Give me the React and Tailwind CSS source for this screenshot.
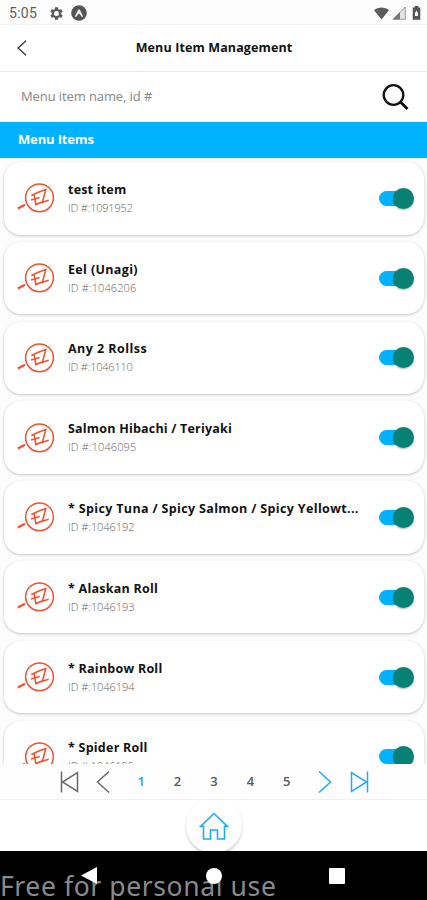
import React from 'react';

const items = [
  { name: 'test item', id: '1091952', nameCls: 'tracking-[0.2px]', idCls: 'tracking-[-0.2px]' },
  { name: 'Eel (Unagi)', id: '1046206', nameCls: 'tracking-[0.36px]', idCls: 'tracking-[0.1px]' },
  { name: 'Any 2 Rollss', id: '1046110', nameCls: 'tracking-[0.45px]', idCls: 'tracking-[-0.2px]' },
  { name: 'Salmon Hibachi / Teriyaki', id: '1046095', nameCls: 'tracking-[0.2px]', idCls: 'tracking-[0.1px]' },
  { name: '* Spicy Tuna / Spicy Salmon / Spicy Yellowt...', id: '1046192', nameCls: 'tracking-[0.35px]', idCls: 'tracking-[-0.05px]' },
  { name: '* Alaskan Roll', id: '1046193', nameCls: 'tracking-[0.24px]', idCls: 'tracking-[-0.05px]' },
  { name: '* Rainbow Roll', id: '1046194', nameCls: 'tracking-[0.24px]', idCls: 'tracking-[-0.05px]' },
  { name: '* Spider Roll', id: '1046195', nameCls: 'tracking-[0.24px]', idCls: 'tracking-[-0.1px]' },
];

const StatusBar = () => (
  <div className="h-6 shrink-0 flex items-center bg-[#fdfdfd] text-[#5c5c5c] pl-[9px] pr-[6px] pt-[2px]">
    <span className="w-[30px] text-[14px] leading-6 tracking-[0.3px] font-['Roboto',sans-serif]">5:05</span>
    <svg className="ml-[10px] w-[15px] h-[15px]" viewBox="0 0 24 24" fill="currentColor">
      <path
        fillRule="evenodd"
        d="M19.4 13a7.500 7.500 0 0 0 0-2l2.100-1.650a.5.5 0 0 0 .12-.64l-2-3.460a.5.5 0 0 0-.6-.22l-2.500 1a7.300 7.300 0 0 0-1.700-.98L14.500 2.400A.5.5 0 0 0 14 2h-4a.5.5 0 0 0-.5.4l-.37 2.650c-.6.250-1.170.58-1.690.98l-2.500-1a.5.5 0 0 0-.6.220l-2 3.460a.5.5 0 0 0 .12.64L4.600 11a7.900 7.900 0 0 0 0 2l-2.100 1.650a.5.5 0 0 0-.12.64l2 3.460c.12.22.38.3.6.22l2.500-1c.52.4 1.080.73 1.690.98l.38 2.650c.03.24.24.4.49.4h4c.25 0 .46-.16.5-.4l.37-2.650a7.300 7.300 0 0 0 1.690-.98l2.500 1c.22.08.48 0 .6-.22l2-3.460a.5.5 0 0 0-.12-.64zM12 16a4 4 0 1 1 0-8 4 4 0 0 1 0 8z"
      />
    </svg>
    <svg className="ml-[7px] w-4 h-4" viewBox="0 0 16 16">
      <circle cx="8" cy="8" r="7.800" fill="#555" />
      <path d="M3.800 11.500 7.300 4.400h1.400l3.500 7.100-1.300.6L8 8.300l-2.900 3.800z" fill="#eee" />
    </svg>
    <svg className="ml-auto w-[15px] h-[13px]" viewBox="0 0 15 13" fill="currentColor">
      <path d="M0 3.200C4.200-.4 10.800-.4 15 3.200L7.500 12.600z" />
    </svg>
    <svg className="ml-[3px] w-[14px] h-[14px]" viewBox="0 0 14 14">
      <path d="M.5 13.500 13.500.5v13z" fill="#e4e4e4" />
      <path d="M.5 13.500 8 6v7.500z" fill="#777" />
      <path d="M1 13.300 13.300 1v12.300z" fill="none" stroke="#888" strokeWidth=".8" />
    </svg>
    <svg className="ml-[6px] w-[9px] h-[14px]" viewBox="0 0 9 14">
      <path d="M2.700 0h3.600v1.500h2v12.200H.7V1.500h2z" fill="#555" />
      <path d="M4.500 4.500 6 7v3H3V7z" fill="#fff" />
    </svg>
  </div>
);

const Logo = () => (
  <svg className="w-[40px] h-[32px] shrink-0" viewBox="0 0 40 32" fill="none" stroke="#ee5333">
    <circle cx="22.500" cy="15.800" r="13.900" strokeWidth="1.500" />
    <path d="M.8 26.500 8 22.800" strokeWidth="2.300" />
    <path d="m14.300 13.500 7.600-3.400M17 12.400l1.900 10.200 6-2.600M14 18l8.600-2.600M21.900 10.100l6.900-2.600-3.400 12.800 6.300-2" strokeWidth="1.600" />
  </svg>
);

const Toggle = () => (
  <div className="w-[35px] h-[21px] shrink-0 flex items-center">
    <div className="w-[26px] h-[15px] rounded-full bg-[#00b2ff]" />
    <div className="-ml-[12px] w-[21px] h-[21px] rounded-full bg-[#078174] shadow-[0_1px_2px_rgba(0,0,0,0.3)]" />
  </div>
);

const ItemCard = ({ item }) => (
  <div className="h-[72.500px] shrink-0 flex items-center bg-white rounded-[17px] pl-[13px] pr-[10px] shadow-[0_1px_3px_rgba(0,0,0,0.22)]">
    <Logo />
    <div className="ml-[11px] flex-1 min-w-0 whitespace-nowrap font-['Open_Sans',sans-serif]">
      <p className={`text-[12.500px] leading-[19px] font-bold text-[#111] ${item.nameCls}`}>{item.name}</p>
      <p className={`text-[11px] leading-[18px] font-light text-[#666] ${item.idCls}`}>ID #:{item.id}</p>
    </div>
    <Toggle />
  </div>
);

const Pagination = () => (
  <div className="h-[35px] shrink-0 flex items-center bg-[#fefefe] pl-[60px] text-[13px] font-semibold text-[#555a5e] font-['Open_Sans',sans-serif]">
    <svg className="w-[19px] h-[22px]" viewBox="0 0 19 22" fill="none" stroke="#666a70" strokeWidth="1.500">
      <path d="M1.500.5v21M17.500 1.500v19L2.500 11z" />
    </svg>
    <svg className="ml-[17px] w-[14px] h-[22px]" viewBox="0 0 14 22" fill="none" stroke="#666a70" strokeWidth="1.500">
      <path d="M13 .5 1.500 11 13 21.500" />
    </svg>
    <div className="ml-[13px] flex">
      <span className="w-[36.400px] text-center text-[#16a9f5]">1</span>
      <span className="w-[36.400px] text-center">2</span>
      <span className="w-[36.400px] text-center">3</span>
      <span className="w-[36.400px] text-center">4</span>
      <span className="w-[36.400px] text-center">5</span>
    </div>
    <svg className="ml-[13px] w-[14px] h-[22px]" viewBox="0 0 14 22" fill="none" stroke="#20aaf5" strokeWidth="1.500">
      <path d="M1 .5 12.500 11 1 21.500" />
    </svg>
    <svg className="ml-[18px] w-[19px] h-[22px]" viewBox="0 0 19 22" fill="none" stroke="#20aaf5" strokeWidth="1.500">
      <path d="M17.500.5v21M1.500 1.500v19L16.500 11z" />
    </svg>
  </div>
);

const App = () => {
  return (
    <div className="w-[427px] h-[900px] flex flex-col overflow-hidden bg-white">
      <StatusBar />

      <header className="h-12 shrink-0 flex items-center border-t border-b border-t-[#f3f3f3] border-b-[#e9e9e9] px-[17px]">
        <svg className="w-[10px] h-4" viewBox="0 0 10 16" fill="none" stroke="#333" strokeWidth="1.300">
          <path d="M9 .8 1 8l8 7.200" />
        </svg>
        <h1 className="flex-1 pt-px pr-[9px] text-center text-[12.500px] font-bold text-[#111] whitespace-nowrap font-['Open_Sans',sans-serif] tracking-[0.12px]">
          Menu Item Management
        </h1>
      </header>

      <div className="h-[50px] shrink-0 flex items-center justify-between pl-[21px] pr-[18px]">
        <span className="text-[13px] tracking-[-0.1px] text-[#888] font-['Open_Sans',sans-serif]">Menu item name, id #</span>
        <svg className="w-[27px] h-[27px]" viewBox="0 0 27 27" fill="none" stroke="#111" strokeWidth="2.300">
          <circle cx="11.500" cy="11" r="9.800" />
          <path d="m18.500 18 7 7" strokeWidth="2.800" />
        </svg>
      </div>

      <div className="h-[36px] shrink-0 flex items-center bg-[#00b2ff] pl-[18px] text-[13px] tracking-[-0.15px] font-bold text-white font-['Open_Sans',sans-serif]">
        Menu Items
      </div>

      <main className="h-[606px] shrink-0 flex flex-col gap-[7.300px] overflow-hidden bg-[#fcfcfc] pt-[4px] pl-1 pr-[3px]">
        {items.map((item) => (
          <ItemCard key={item.id} item={item} />
        ))}
      </main>

      <Pagination />

      <div className="h-[52px] shrink-0 flex justify-center border-t border-[#f0f0f0] overflow-hidden">
        <div className="-mt-[2px] w-[56px] h-[55px] rounded-full bg-white flex items-center justify-center shadow-[0_2px_3px_rgba(0,0,0,0.2)]">
          <svg className="w-[30px] h-[28px]" viewBox="0 0 30 28" fill="none" stroke="#20aaf5" strokeWidth="1.600">
            <path d="M4.500 14.200H1.800L15 1.500l13.200 12.700h-2.700V27h-7v-9h-7v9h-7z" />
          </svg>
        </div>
      </div>

      <footer className="relative h-[49px] shrink-0 bg-black overflow-hidden">
        <p className="absolute left-0 top-[17px] text-[26.500px] leading-[36px] text-[#8a8a8a] whitespace-nowrap font-['Noto_Sans',sans-serif] tracking-[0.6px]">
          Free for personal use
        </p>
        <div className="relative flex items-center pl-[81px] pt-[16px]">
          <svg className="w-4 h-[17px]" viewBox="0 0 16 17" fill="#fff">
            <path d="M16 0v17L0 8.500z" />
          </svg>
          <div className="ml-[109px] w-4 h-4 rounded-full bg-white" />
          <div className="ml-[107px] w-4 h-4 rounded-[1px] bg-white" />
        </div>
      </footer>
    </div>
  );
};

export default App;
